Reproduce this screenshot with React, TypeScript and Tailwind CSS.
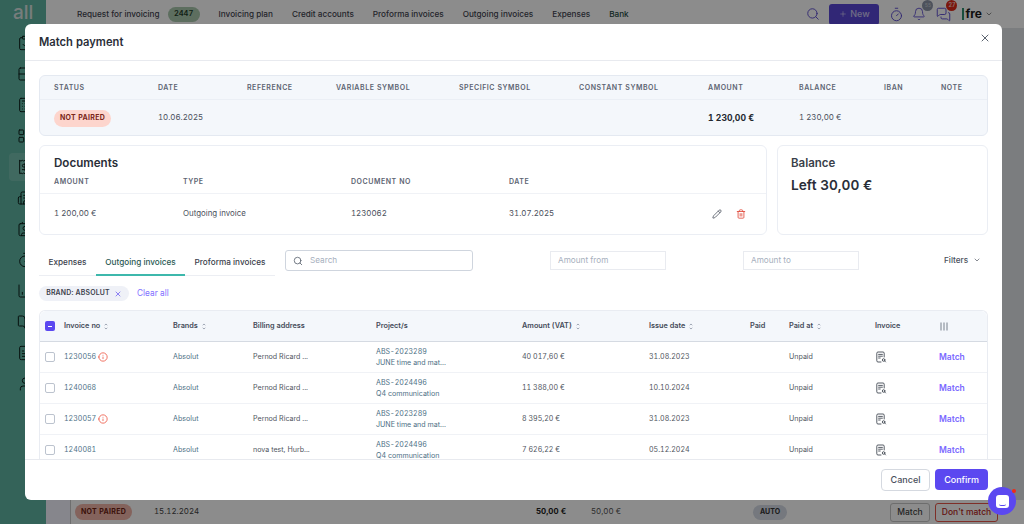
import {
  BarChart3, Bell, BookOpen, Building2, Calculator, ChevronDown, CircleAlert, ClipboardCheck, Contact, FileText,
  LayoutGrid, MessagesSquare, Pencil, Plus, Receipt, Rows2, Search, Timer, Trash2, User, X,
} from 'lucide-react';

const navItems = ['Invoicing plan', 'Credit accounts', 'Proforma invoices', 'Outgoing invoices', 'Expenses', 'Bank'];

const sideIcons = [ClipboardCheck, Rows2, Calculator, LayoutGrid, Receipt, Building2, Contact, Timer, BarChart3, BookOpen, FileText, User];

const paymentCols = [
  'w-[104px]', 'w-[89px]', 'w-[89px]', 'w-[123px]', 'w-[120px]', 'w-[129px]', 'w-[91px]', 'w-[85px]', 'w-[57px]', 'w-[40px]',
];
const paymentHead = ['Status', 'Date', 'Reference', 'Variable symbol', 'Specific symbol', 'Constant symbol', 'Amount', 'Balance', 'IBAN', 'Note'];

const rows = [
  { no: '1230056', warn: true, addr: 'Pernod Ricard ...', code: 'ABS-2023289', project: 'JUNE time and mat...', amount: '40 017,60 €', date: '31.08.2023' },
  { no: '1240068', warn: false, addr: 'Pernod Ricard ...', code: 'ABS-2024496', project: 'Q4 communication', amount: '11 388,00 €', date: '10.10.2024' },
  { no: '1230057', warn: true, addr: 'Pernod Ricard ...', code: 'ABS-2023289', project: 'JUNE time and mat...', amount: '8 395,20 €', date: '31.08.2023' },
  { no: '1240081', warn: false, addr: 'nova test, Hurb...', code: 'ABS-2024496', project: 'Q4 communication', amount: '7 626,22 €', date: '05.12.2024' },
];

const tableGrid = 'grid grid-cols-[19px_109px_80px_123px_146px_127px_101px_39px_86px_64px_1fr] items-center pl-[5px]';

function Sort() {
  return (
    <svg width="4" height="7" viewBox="0 0 4 7" className="ml-[4px] shrink-0 text-[#8a93a3]" fill="none" stroke="currentColor" strokeWidth="0.8">
      <path d="M.7 2.2 2 1l1.3 1.2M.7 4.8 2 6l1.3-1.2" />
    </svg>
  );
}

function InvoiceIcon() {
  return (
    <svg width="12" height="12" viewBox="0 0 12 12" fill="none" stroke="#444b55" strokeWidth="0.9" strokeLinecap="round">
      <path d="M6 11H3a1.2 1.2 0 0 1-1.2-1.2V2.2A1.2 1.2 0 0 1 3 1h5a1.2 1.2 0 0 1 1.2 1.2V6" />
      <path d="M3.6 3.4h3.8M3.6 5.2h3.8M3.6 7h1.6" />
      <circle cx="8.6" cy="9" r="1.3" />
      <path d="m9.6 10 .9.9" />
    </svg>
  );
}

function HeadCell({ label, sort }: { label: string; sort?: boolean }) {
  return (
    <div className="flex items-center text-[7.3px] font-semibold text-[#444b59] whitespace-nowrap">
      {label}
      {sort && <Sort />}
    </div>
  );
}

function Background() {
  return (
    <div className="flex h-[524px] w-[1024px] bg-[#e1e3e8]">
      <aside className="w-[46px] shrink-0 bg-[#5fb5a3] flex flex-col items-start">
        <div className="h-[4px]" />
        <div className="ml-[13px] h-[17px] text-[19px] leading-[17px] font-medium text-[#dbe4e2]">all</div>
        <div className="mt-[14px] flex flex-col gap-[15px]">
          {sideIcons.map((Icon, i) => (
            <div key={i} className="relative ml-[17px] h-[16px] w-[16px]">
              {i === 4 && <span className="absolute -left-[8px] -top-[6px] h-[28px] w-[30px] rounded-[4px] bg-white/15" />}
              <Icon size={16} strokeWidth={1.5} className="relative text-[#0c1f1a]" />
            </div>
          ))}
        </div>
      </aside>
      <div className="flex-1 flex flex-col min-w-0">
        <header className="h-[28px] shrink-0 bg-white flex items-center pl-[31px] pr-[31px] text-[8.2px] font-medium text-[#3f4450]">
          <span>Request for invoicing</span>
          <span className="ml-[8px] mr-[19px] flex h-[15px] w-[32px] items-center justify-center rounded-full bg-[#a9c9ae] text-[7.5px] font-semibold text-[#1f3b28]">2447</span>
          <div className="flex gap-[19px]">
            {navItems.map((n) => (
              <span key={n} className={n === 'Bank' ? 'text-[#1e4a3f]' : ''}>{n}</span>
            ))}
          </div>
          <div className="ml-auto flex items-center text-[#5a4ad0]">
            <Search size={14} strokeWidth={1.6} />
            <span className="ml-[9px] flex h-[21px] w-[50px] items-center justify-center gap-[3px] rounded-[3px] bg-[#5a48d8] text-[9px] text-white/70">
              <Plus size={8} /> New
            </span>
            <Timer size={15} strokeWidth={1.5} className="ml-[10px]" />
            <span className="relative ml-[8px]">
              <Bell size={14} strokeWidth={1.5} />
              <span className="absolute -right-[7px] -top-[7px] flex h-[11px] w-[11px] items-center justify-center rounded-full bg-[#8c96a8] text-[5px] text-white/50">55</span>
            </span>
            <span className="relative ml-[10px]">
              <MessagesSquare size={15} strokeWidth={1.5} />
              <span className="absolute -right-[6px] -top-[7px] flex h-[11px] w-[11px] items-center justify-center rounded-full bg-[#e02a18] text-[5.5px] font-semibold text-white/80">27</span>
            </span>
            <span className="ml-[11px] border-l-2 border-[#2f8f6f] pl-[1px] text-[12px] leading-[12px] font-bold text-[#1a1a1a]">fre</span>
            <ChevronDown size={8} className="ml-[3px] text-[#555]" />
          </div>
        </header>
        <div className="flex-1 flex flex-col justify-end">
          <div className="flex h-[24px] items-center bg-white text-[7.9px]">
            <div className="h-full w-[25px] shrink-0 border-r border-[#c9c9c9] bg-[#f5f5ff]" />
            <div className="w-[83px] shrink-0 pl-[4px]">
              <span className="flex h-[16px] w-[57px] items-center justify-center rounded-full bg-[#f0b4a8] text-[7px] font-bold tracking-[0.3px] text-[#6d1f12]">NOT PAIRED</span>
            </div>
            <div className="w-[382px] shrink-0 text-[#444]">15.12.2024</div>
            <div className="w-[55px] shrink-0 font-bold text-[#222]">50,00 €</div>
            <div className="w-[162px] shrink-0 text-[#555]">50,00 €</div>
            <div className="w-[137px] shrink-0">
              <span className="flex h-[15px] w-[34px] items-center justify-center rounded-full bg-[#d5dbe5] text-[7px] font-bold text-[#333]">AUTO</span>
            </div>
            <span className="flex h-[19px] w-[40px] shrink-0 items-center justify-center rounded-[3px] border border-[#c7c7c7] text-[8.5px] font-medium text-[#444]">Match</span>
            <span className="ml-[5px] flex h-[19px] w-[63px] shrink-0 items-center justify-center rounded-[3px] border border-[#e5574a] text-[8.5px] font-medium text-[#b5241a]">Don't match</span>
          </div>
        </div>
      </div>
    </div>
  );
}

export default function App() {
  return (
    <div className="relative h-[524px] w-[1024px] overflow-hidden tabular-nums [font-family:Inter,sans-serif]">
      <Background />
      <div className="absolute inset-0 bg-[#00000073]" />

      <div className="absolute left-[25px] top-[24px] flex h-[476px] w-[977px] flex-col overflow-hidden rounded-[6px] bg-white">
        <div className="flex h-[37px] shrink-0 items-center justify-between border-b border-[#e8eaef] pl-[14px] pr-[11px] pt-[1px]">
          <h2 className="text-[11.2px] font-semibold text-[#2a2e38]">Match payment</h2>
          <X size={12} className="mb-[10px] text-[#5c6470]" />
        </div>

        <div className="flex-1 overflow-hidden px-[14px] pt-[14px]">
          <div className="h-[61px] w-[949px] rounded-[6px] border border-[#e4e9f1] bg-[#f4f7fb]">
            <div className="flex h-[24px] items-center border-b border-[#ebeff5] pl-[14px] pt-[1px] text-[7px] font-semibold uppercase tracking-[0.55px] text-[#5d6472]">
              {paymentHead.map((h, i) => (
                <div key={h} className={paymentCols[i]}>{h}</div>
              ))}
            </div>
            <div className="flex h-[36px] items-center pl-[14px] text-[7.9px] text-[#4a505c]">
              <div className={paymentCols[0]}>
                <span className="inline-flex h-[17px] w-[57px] items-center justify-center rounded-full bg-[#fdd5cd] text-[7px] font-bold tracking-[0.3px] text-[#7a271a]">NOT PAIRED</span>
              </div>
              <div className={paymentCols[1]}>10.06.2025</div>
              <div className={paymentCols[2]} />
              <div className={paymentCols[3]} />
              <div className={paymentCols[4]} />
              <div className={paymentCols[5]} />
              <div className={`${paymentCols[6]} text-[8.6px] font-bold text-[#23272f]`}>1 230,00 €</div>
              <div className={paymentCols[7]}>1 230,00 €</div>
            </div>
          </div>

          <div className="mt-[9px] flex gap-[10px]">
            <div className="h-[90px] w-[728px] rounded-[6px] border border-[#ebeef4]">
              <div className="pl-[14px] pt-[9px] text-[11.6px] leading-[16px] font-semibold text-[#2a2e38]">Documents</div>
              <div className="mt-[6px] flex h-[17px] items-start border-b border-[#f0f2f6] pl-[14px] text-[7px] font-semibold uppercase tracking-[0.55px] text-[#5d6472]">
                <div className="w-[129px]">Amount</div>
                <div className="w-[168px]">Type</div>
                <div className="w-[158px]">Document no</div>
                <div>Date</div>
              </div>
              <div className="flex h-[40px] items-center pl-[14px] pr-[20px] text-[7.9px] text-[#4a505c]">
                <div className="w-[129px]">1 200,00 €</div>
                <div className="w-[168px]">Outgoing invoice</div>
                <div className="w-[158px]">1230062</div>
                <div>31.07.2025</div>
                <Pencil size={10} className="ml-auto text-[#555c68]" />
                <Trash2 size={10} className="ml-[14px] text-[#e0483a]" />
              </div>
            </div>
            <div className="h-[90px] w-[211px] rounded-[6px] border border-[#ebeef4] pl-[13px] pt-[9px]">
              <div className="text-[11.5px] leading-[16px] font-semibold text-[#3a3f4a]">Balance</div>
              <div className="mt-[5px] text-[13.7px] leading-[18px] font-semibold text-[#2a2e38]">Left 30,00 €</div>
            </div>
          </div>

          <div className="mt-[15px] flex h-[27px] items-start">
            <div className="flex h-[26px] w-[236px] shrink-0 items-start border-b border-[#eceef3] text-[8.2px] font-medium text-[#3a404b]">
              <div className="flex h-[25px] w-[57px] items-center justify-center">Expenses</div>
              <div className="flex h-[26px] w-[89px] items-center justify-center border-b-2 border-[#3db8ac] text-[#2b5a55]">Outgoing invoices</div>
              <div className="flex h-[25px] w-[90px] items-center justify-center">Proforma invoices</div>
            </div>
            <div className="ml-[10px] flex h-[21px] w-[188px] shrink-0 items-center rounded-[3px] border border-[#cfd5de] pl-[7px] text-[8.2px] text-[#a6afbd]">
              <Search size={10} className="text-[#5b6470]" />
              <span className="ml-[7px]">Search</span>
            </div>
            <div className="ml-[77px] mt-[1px] flex h-[19px] w-[116px] shrink-0 items-center border border-[#e9ebf0] pl-[7px] text-[8.2px] text-[#a6afbd]">Amount from</div>
            <div className="ml-[77px] mt-[1px] flex h-[19px] w-[116px] shrink-0 items-center border border-[#e9ebf0] pl-[7px] text-[8.2px] text-[#a6afbd]">Amount to</div>
            <div className="ml-[85px] mt-[4px] flex items-center text-[8.2px] font-medium text-[#4a505c]">
              Filters
              <ChevronDown size={8} className="ml-[5px]" />
            </div>
          </div>

          <div className="mt-[9px] flex h-[15px] items-center">
            <span className="flex h-[15px] w-[90px] items-center justify-center gap-[4px] rounded-full bg-[#eff1f7] text-[6.9px] font-semibold tracking-[0.2px] text-[#3a404b]">
              BRAND: ABSOLUT <X size={8} strokeWidth={2} className="text-[#5b48f0]" />
            </span>
            <span className="ml-[8px] text-[8.3px] text-[#7f70ff]">Clear all</span>
          </div>

          <div className="mt-[9px] w-[949px] rounded-t-[6px] border border-b-0 border-[#e9ecf2]">
            <div className={`${tableGrid} h-[31px] rounded-t-[6px] border-b border-[#d5dae2] bg-[#f4f7fb]`}>
              <span className="flex h-[10px] w-[10px] items-center justify-center rounded-[2px] bg-[#5b48f0]">
                <span className="h-[1px] w-[4px] bg-white" />
              </span>
              <HeadCell label="Invoice no" sort />
              <HeadCell label="Brands" sort />
              <HeadCell label="Billing address" />
              <HeadCell label="Project/s" />
              <HeadCell label="Amount (VAT)" sort />
              <HeadCell label="Issue date" sort />
              <HeadCell label="Paid" />
              <HeadCell label="Paid at" sort />
              <HeadCell label="Invoice" />
              <svg width="8" height="9" viewBox="0 0 8 9" className="ml-[1px] text-[#6a7280]" stroke="currentColor" strokeWidth="0.9">
                <path d="M1 .5v8M4 .5v8M7 .5v8" />
              </svg>
            </div>
            {rows.map((r) => (
              <div key={r.no + r.date} className={`${tableGrid} h-[31px] border-b border-[#f0f2f6] text-[7.1px] text-[#4f5560]`}>
                <span className="h-[10px] w-[10px] rounded-[2px] border border-[#bcc3ce] bg-white" />
                <div className="flex items-center text-[#4d7288]">
                  {r.no}
                  {r.warn && <CircleAlert size={10} className="ml-[2px] rotate-180 text-[#ee5a48]" />}
                </div>
                <div className="text-[#4d6f85]">Absolut</div>
                <div>{r.addr}</div>
                <div className="leading-[11px] text-[#4d6f85]">
                  <div>{r.code}</div>
                  <div>{r.project}</div>
                </div>
                <div>{r.amount}</div>
                <div>{r.date}</div>
                <div />
                <div>Unpaid</div>
                <InvoiceIcon />
                <div className="text-[8.5px] font-semibold text-[#7a68ff]">Match</div>
              </div>
            ))}
          </div>
        </div>

        <div className="flex h-[41px] shrink-0 items-center justify-end gap-[5px] border-t border-[#e8eaef] pb-[1px] pr-[14px]">
          <button className="flex h-[22px] w-[49px] items-center justify-center rounded-[4px] border border-[#d5d9e0] text-[9px] font-medium text-[#4a505c]">Cancel</button>
          <button className="flex h-[21px] w-[53px] items-center justify-center rounded-[4px] bg-[#5b48f0] text-[9px] font-medium text-white">Confirm</button>
        </div>
      </div>

      <div className="absolute left-[988px] top-[487px] flex h-[28px] w-[28px] items-center justify-center rounded-full bg-[#5b48f0]">
        <span className="flex h-[13px] w-[13px] items-end justify-center rounded-[3px] bg-white pb-[2px]">
          <span className="h-[2px] w-[7px] rounded-b-full border-b border-[#5b48f0]" />
        </span>
        <span className="absolute right-[0px] top-[2px] h-[4px] w-[4px] rounded-full bg-[#f02a18]" />
      </div>
    </div>
  );
}
